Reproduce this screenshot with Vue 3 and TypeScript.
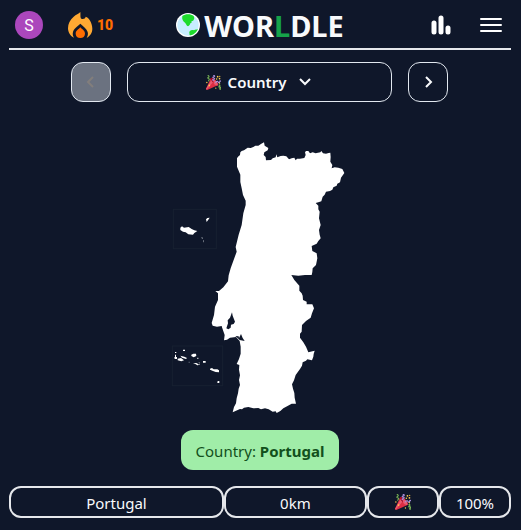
<script setup lang="ts">
import { ref } from 'vue'

interface Guess {
  name: string
  distance: string
  proximity: string
}

const streak = ref<number>(10)
const answer = 'Portugal'
const guesses = ref<Guess[]>([{ name: 'Portugal', distance: '0km', proximity: '100%' }])
</script>

<template>
  <div class="page">
    <svg class="defs" aria-hidden="true">
      <symbol id="party" viewBox="0 0 36 36">
        <path fill="#dd2e44" d="M11.626 7.488c-.112.112-.197.247-.268.395l-.008-.008L.134 33.141l.011.011c-.208.403.14 1.223.853 1.937.713.713 1.533 1.061 1.936.853l.01.01L28.21 24.735l-.008-.009c.147-.07.282-.155.395-.269 1.562-1.562-.971-6.627-5.656-11.313-4.687-4.686-9.752-7.218-11.315-5.656z" />
        <path fill="#ea596e" d="M13 12L.416 32.506l-.282.635.011.011c-.208.403.14 1.223.853 1.937.232.232.473.408.709.557L17 17l-4-5z" />
        <path fill="#a0041e" d="M23.012 13.066c4.67 4.672 7.263 9.652 5.789 11.124-1.473 1.474-6.453-1.118-11.126-5.788-4.671-4.672-7.263-9.654-5.79-11.127 1.474-1.473 6.454 1.119 11.127 5.791z" />
        <path fill="#ea596e" d="M18 14c-1 3 0 6 2 8 2 2 5 3 8 3 2-2-1-8-5-12-3-3-4-2-5 1z" />
        <g fill="none" stroke-width="2.500" stroke-linecap="round">
          <path stroke="#aa8dd8" d="M18 13c-3-.5-3-3 1-3 3-1 2-3-1-3s-2-3 1-3 2-3-.5-3M23 18c3-4 6-3 6-1s4 2 4-1 2-2 2-1" />
          <path stroke="#77b255" d="M31 24c3-1 3 2 1 3s-1 3 1 2 3 2 1 3-1 3 1 2M5 1c4 2 2 4 0 5s0 3 2 3 1 3-1 5" />
        </g>
        <g fill="#ffcc4d">
          <circle cx="25.500" cy="9.500" r="1.800" /><circle cx="2" cy="18" r="1.700" />
          <circle cx="32.500" cy="19.500" r="1.600" /><circle cx="23.500" cy="31.500" r="1.500" />
          <circle cx="28" cy="4" r="2" /><circle cx="32.500" cy="8.500" r="2" />
          <circle cx="33" cy="3" r="1.500" /><circle cx="8" cy="25" r="2" />
        </g>
      </symbol>
    </svg>

    <header class="header">
      <div class="side">
        <button class="avatar" aria-label="Account">S</button>
        <div class="streak">
          <svg class="flame" viewBox="0 0 75 78" aria-hidden="true">
            <path fill="#ffa933" d="M37 0C38 6 36 18 40 20C46 22 52 20 53 14C62 16 73 32 73 50C73 62 66 73 56 77C59 73 61 67 59 60C56 50 46 44 37 35C28 44 17 50 15 60C13 67 15 73 18 77C8 73 0 62 0 49C0 34 6 24 17 14C24 8 32 5 37 0Z" />
            <path fill="#ff6d00" d="M37 46C42 52 51 56 51 65C51 73 45 78 37 78S23 73 23 65C23 56 32 52 37 46Z" />
          </svg>
          <span>{{ streak }}</span>
        </div>
      </div>

      <h1 class="logo">
        <svg class="globe" viewBox="0 0 72 72" aria-hidden="true">
          <circle cx="36" cy="36" r="36" fill="#fff" />
          <circle cx="36" cy="36" r="32" fill="#c8edff" />
          <path fill="#1ddb2b" d="M19 9C28 2 44 2 53 9L55 15C54 21 51 25 46 25C49 29 45 30 43 31C42 35 40 38 36 40C31 38 31 32 27 29C21 26 17 18 19 9ZM40 61C38 54 46 49 54 52C58 48 62 51 66 48A32 32 0 0 1 44 67C38 67 42 64 40 61Z" />
        </svg>
        <span>WOR<em>L</em>DLE</span>
      </h1>

      <div class="side actions">
        <button class="icon-button" aria-label="Statistics">
          <svg class="bars" viewBox="0 0 20 20" aria-hidden="true">
            <path d="M3 8v9M10 3v14M17 13v4" fill="none" stroke="#fff" stroke-width="5" stroke-linecap="round" />
          </svg>
        </button>
        <button class="icon-button" aria-label="Menu">
          <svg class="menu" viewBox="0 0 22 14" aria-hidden="true">
            <path d="M1 1h20M1 7h20M1 13h20" fill="none" stroke="#fff" stroke-width="2" stroke-linecap="round" />
          </svg>
        </button>
      </div>
    </header>

    <main class="main">
      <nav class="rounds" aria-label="Rounds">
        <button class="step" disabled aria-label="Previous round">
          <svg viewBox="0 0 16 16" aria-hidden="true"><path d="M10 3L5 8l5 5" /></svg>
        </button>
        <button class="round" aria-haspopup="listbox">
          <svg class="party" aria-hidden="true"><use href="#party" /></svg>
          <span>Country</span>
          <svg class="chevron" viewBox="0 0 16 16" aria-hidden="true"><path d="M3 5l5 5 5-5" /></svg>
        </button>
        <button class="step" aria-label="Next round">
          <svg viewBox="0 0 16 16" aria-hidden="true"><path d="M6 3l5 5-5 5" /></svg>
        </button>
      </nav>

      <svg class="map" viewBox="0 0 603 870" role="img" aria-label="Country outline">
        <g fill="none" stroke="#172131" stroke-width="3">
          <rect x="40" y="232" width="129" height="118" />
          <rect x="37" y="642" width="151" height="119" />
        </g>
        <path fill="#fff" d="M231 79L234 74 240 69 241 61 245 57 252 55 263 47 272 48 280 45 286 41 295 41 304 35 312 31 314 41 325 48 323 55 313 61 311 69 317 75 318 85 333 84 338 79 347 76 349 67 352 76 362 72 370 71 379 73 383 77 387 82 395 79 403 77 407 85 411 80 420 80 433 78 437 69 435 61 438 57 445 57 450 64 458 61 467 64 481 61 484 57 489 64 498 65 506 63 511 62 512 75 511 89 517 99 515 109 524 106 535 107 547 111 553 123 543 137 540 151 532 155 530 161 520 166 517 173 510 177 498 179 494 188 488 194 484 208 475 211 467 213 475 221 475 232 479 239 477 259 482 279 477 294 479 308 482 319 475 327 470 335 455 342 457 357 470 364 472 379 468 399 458 409 457 420 455 429 435 429 415 431 394 429 403 444 418 461 418 476 425 484 428 491 429 504 440 509 440 517 457 517 462 529 456 544 452 557 438 567 426 579 425 599 420 605 420 617 430 631 438 644 445 661 464 656 461 666 460 674 456 685 442 682 438 686 428 691 426 701 420 711 407 729 402 745 396 757 399 770 403 783 404 797 408 815 395 815 384 821 370 829 361 837 350 843 347 838 338 839 326 832 315 829 303 832 295 828 280 829 265 825 252 827 246 832 240 831 218 841 222 825 228 814 230 799 234 784 236 770 240 759 237 744 240 730 237 713 238 699 230 696 237 681 242 665 242 644 239 627 228 615 210 617 201 623 192 625 194 609 187 589 185 582 171 584 158 581 155 573 162 549 165 524 174 504 174 484 166 477 177 477 190 466 204 448 206 430 212 409 230 359 227 345 236 308 245 279 250 244 257 219 257 206 249 189 245 169 241 150 241 128 231 104Z" />
        <path fill="#0f172a" d="M216 541L218 551 225 569 221 576 213 578 212 587 205 592 199 589 204 574 203 565 210 557ZM226 612L236 613 237 618 243 606 248 618 254 627 239 624 232 617Z" />
        <path fill="#fff" d="M61 287L66 283 72 287 86 285 95 291 103 295 112 297 103 303 99 308 85 307 77 301 69 299 61 294ZM138 262L142 258 149 257 145 263 140 270ZM69 653h6v4h-6ZM45 660h4v3h-4ZM45 668h3v8h-3ZM43 675h8v6h-7ZM61 671l12 3 8 4-3 3-12-4ZM53 680l10-2 9 7-8 3-11-3ZM94 668l6-3h8l1 7-8 4-7-4ZM99 694l10-1 7 4-2 3 5-5-4-6 4 3 0 6-7 2-6-4ZM129 687h8v5h-8ZM112 677h3v4h-3ZM150 710l6-2 5 4 11 0 5 3 0 6-10-1-8-3-9-4ZM173 747h5v6h-6Z" />
        <path fill="#7d838f" d="M124 315h3l2 5-3 1ZM129 325h3v6h-2ZM86 689h3v3h-3Z" />
      </svg>

      <p class="answer">Country: <strong>{{ answer }}</strong></p>

      <div v-for="guess in guesses" :key="guess.name" class="guess">
        <div class="cell">{{ guess.name }}</div>
        <div class="cell">{{ guess.distance }}</div>
        <div class="cell"><svg class="party" role="img" aria-label="Correct"><use href="#party" /></svg></div>
        <div class="cell">{{ guess.proximity }}</div>
      </div>
    </main>
  </div>
</template>

<style>
body {
  margin: 0;
  background: #0f172a;
}
</style>

<style scoped>
.page {
  box-sizing: border-box;
  padding: 0 10px 12px 9px;
  color: #f8fafc;
  font-family: 'Noto Sans', 'Open Sans', sans-serif;
  font-size: 15px;
}
.defs {
  display: block;
  width: 0;
  height: 0;
}
button {
  padding: 0;
  border: 0;
  background: none;
  color: inherit;
  font: inherit;
  cursor: pointer;
}
svg {
  flex: none;
}
.header {
  display: grid;
  grid-template-columns: 1fr auto 1fr;
  align-items: center;
  height: 48px;
  border-bottom: 2px solid #e5e7eb;
}
.side {
  display: flex;
  align-items: center;
  gap: 25px;
  padding: 0 9px 0 6px;
}
.actions {
  justify-content: flex-end;
  gap: 29px;
}
.avatar {
  width: 28px;
  height: 28px;
  border-radius: 50%;
  background: #ab47bc;
  color: #fff;
  font-family: Roboto, sans-serif;
  font-size: 16px;
}
.streak {
  display: flex;
  align-items: center;
  gap: 4px;
  color: #ff6d00;
  font-family: Roboto, sans-serif;
  font-size: 14px;
  font-weight: 900;
}
.flame {
  width: 25px;
  height: 26px;
}
.logo {
  display: flex;
  align-items: center;
  gap: 4px;
  margin: 0;
  font-size: 29px;
  font-weight: 700;
  line-height: 48px;
}
.logo span {
  padding-top: 2px;
}
.logo em {
  color: #16a34a;
  font-style: normal;
}
.globe {
  width: 24px;
  height: 24px;
}
.icon-button {
  display: flex;
}
.bars {
  width: 20px;
  height: 20px;
}
.menu {
  width: 22px;
  height: 14px;
}
.main {
  display: flex;
  flex-direction: column;
}
.rounds {
  display: flex;
  gap: 16px;
  padding: 12px 63px 0 62px;
}
.step,
.round {
  display: flex;
  align-items: center;
  justify-content: center;
  box-sizing: border-box;
  height: 40px;
  border: 1px solid #e2e8f0;
  border-radius: 12px;
}
.step {
  flex: none;
  width: 40px;
}
.step:disabled {
  background: #6b7280;
  color: #827e7c;
  cursor: default;
}
.round {
  flex: 1;
  gap: 7px;
  font-weight: 600;
}
.step svg,
.chevron {
  width: 16px;
  height: 16px;
  fill: none;
  stroke: currentColor;
  stroke-width: 2;
}
.chevron {
  margin-left: 4px;
}
.party {
  width: 15px;
  height: 15px;
}
.map {
  align-self: center;
  width: 201px;
  height: 290px;
  margin-top: 30px;
}
.answer {
  align-self: center;
  box-sizing: border-box;
  height: 40px;
  margin: 8px 0 16px;
  padding: 0 15px;
  border-radius: 12px;
  background: #a0eda8;
  color: #12501c;
  line-height: 42px;
}
.guess {
  display: grid;
  grid-template-columns: 3fr 2fr 72px 72px;
}
.cell {
  display: flex;
  align-items: center;
  justify-content: center;
  box-sizing: border-box;
  height: 32px;
  padding-top: 2px;
  border: 2px solid #e5e7eb;
  border-radius: 12px;
}
.cell .party {
  width: 16px;
  height: 16px;
  margin-bottom: 2px;
}
</style>
